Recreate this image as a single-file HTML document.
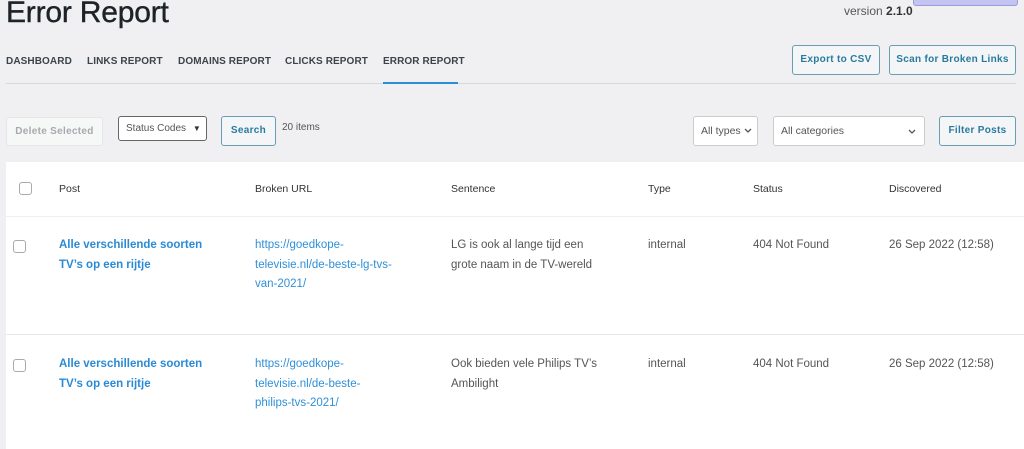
<!DOCTYPE html>
<html><head><style>
body{margin:0;width:1024px;height:449px;overflow:hidden;background:#f0f0f2;font-family:"Liberation Sans",sans-serif;color:#333;position:relative}
.a{position:absolute;white-space:nowrap}
h1{position:absolute;left:6px;top:-4px;margin:0;font-size:30px;font-weight:normal;color:#1d2327;letter-spacing:-0.2px;-webkit-text-stroke:0.4px #1d2327}
.nav{font-size:10px;font-weight:bold;color:#3c434a;letter-spacing:0.1px;top:56px}
.btn{position:absolute;border:1px solid #6a9db5;border-radius:3px;background:#f3f5f6;color:#2a7aa0;font-size:10px;font-weight:bold;text-align:center;box-sizing:border-box;letter-spacing:0.3px}
.sel{position:absolute;background:#fff;border:1px solid #ccc;border-radius:3px;box-sizing:border-box;font-size:10.5px;color:#555}
.tbl{position:absolute;left:6px;top:162px;width:1018px;height:287px;background:#fff}
.hd{font-size:10.5px;color:#333;top:183px}
.cb{position:absolute;width:11px;height:11px;border:1px solid #aaa;border-radius:3px;background:#fff}
.t{font-size:11.5px;line-height:19.5px;color:#555}
.lk{color:#2f8fd8}
.pl{color:#2a8ad6;font-weight:bold;font-size:11.5px;line-height:19.5px}
</style></head><body>
<h1>Error Report</h1>
<div class="a" style="left:844px;top:4px;font-size:12px;color:#555">version <b style="color:#333">2.1.0</b></div>
<div class="a" style="left:913px;top:-6px;width:103px;height:10px;background:#c3c4f0;border:1px solid #9a9ce0;border-radius:3px"></div>
<div class="a nav" style="left:6px">DASHBOARD</div>
<div class="a nav" style="left:87px">LINKS REPORT</div>
<div class="a nav" style="left:178px">DOMAINS REPORT</div>
<div class="a nav" style="left:285px">CLICKS REPORT</div>
<div class="a nav" style="left:383px">ERROR REPORT</div>
<div class="a" style="left:6px;top:83px;width:1010px;height:1px;background:#d8d8da"></div>
<div class="a" style="left:383px;top:82px;width:75px;height:2px;background:#2b8fd6"></div>
<div class="btn" style="left:792px;top:45px;width:88px;height:30px;line-height:28px">Export to CSV</div>
<div class="btn" style="left:889px;top:45px;width:127px;height:30px;line-height:28px">Scan for Broken Links</div>
<div class="btn" style="left:6px;top:117px;width:97px;height:29px;line-height:27px;border-color:#e6e6e6;color:#a7aaad;background:#f6f7f7">Delete Selected</div>
<div class="sel" style="left:118px;top:116px;width:89px;height:25px;line-height:23px;padding-left:7px;border-color:#666;font-size:10px">Status Codes <span style="font-size:8px;margin-left:4px;color:#333">▼</span></div>
<div class="btn" style="left:221px;top:116px;width:55px;height:30px;line-height:28px">Search</div>
<div class="a" style="left:282px;top:122px;font-size:10px;color:#555">20 items</div>
<div class="sel" style="left:693px;top:116px;width:65px;height:30px;line-height:28px;padding-left:7px">All types <svg width="8" height="6" style="vertical-align:middle"><path d="M1 1L4 4L7 1" fill="none" stroke="#555" stroke-width="1.3"/></svg></div>
<div class="sel" style="left:773px;top:116px;width:152px;height:30px;line-height:28px;padding-left:7px">All categories<svg width="8" height="6" style="position:absolute;right:8px;top:12px"><path d="M1 1L4 4L7 1" fill="none" stroke="#555" stroke-width="1.3"/></svg></div>
<div class="btn" style="left:939px;top:116px;width:77px;height:30px;line-height:28px">Filter Posts</div>
<div class="tbl"></div>
<div class="a" style="left:6px;top:216px;width:1018px;height:1px;background:#f0f0f0"></div>
<div class="a" style="left:6px;top:334px;width:1018px;height:1px;background:#e8e8e8"></div>
<div class="cb" style="left:19px;top:182px"></div>
<div class="a hd" style="left:59px">Post</div>
<div class="a hd" style="left:255px">Broken URL</div>
<div class="a hd" style="left:451px">Sentence</div>
<div class="a hd" style="left:648px">Type</div>
<div class="a hd" style="left:753px">Status</div>
<div class="a hd" style="left:889px">Discovered</div>

<div class="cb" style="left:13px;top:240px"></div>
<div class="a pl" style="left:59px;top:236px">Alle verschillende soorten<br>TV’s op een rijtje</div>
<div class="a t lk" style="left:255px;top:236px">https://goedkope-<br>televisie.nl/de-beste-lg-tvs-<br>van-2021/</div>
<div class="a t" style="left:451px;top:236px">LG is ook al lange tijd een<br>grote naam in de TV-wereld</div>
<div class="a t" style="left:648px;top:236px">internal</div>
<div class="a t" style="left:753px;top:236px">404 Not Found</div>
<div class="a t" style="left:889px;top:236px">26 Sep 2022 (12:58)</div>

<div class="cb" style="left:13px;top:359px"></div>
<div class="a pl" style="left:59px;top:355px">Alle verschillende soorten<br>TV’s op een rijtje</div>
<div class="a t lk" style="left:255px;top:355px">https://goedkope-<br>televisie.nl/de-beste-<br>philips-tvs-2021/</div>
<div class="a t" style="left:451px;top:355px">Ook bieden vele Philips TV’s<br>Ambilight</div>
<div class="a t" style="left:648px;top:355px">internal</div>
<div class="a t" style="left:753px;top:355px">404 Not Found</div>
<div class="a t" style="left:889px;top:355px">26 Sep 2022 (12:58)</div>
</body></html>
